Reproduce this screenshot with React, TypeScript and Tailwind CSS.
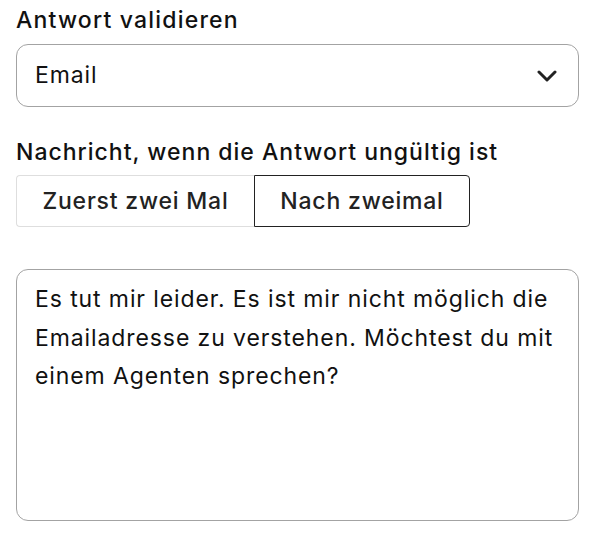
import React from "react";

export default function App() {
  const font = { fontFamily: "Inter, 'Noto Sans', sans-serif" };
  return (
    <div className="w-[590px] h-[538px] bg-white pl-4 pr-[11px] pt-[5px]" style={font}>
      <div className="text-[23px] leading-[30px] font-medium text-[#111] tracking-[1.2px]">Antwort validieren</div>
      <div className="mt-[9px] h-[63px] rounded-[12px] border border-[#a3a3a3] flex items-center justify-between pl-[18px] pr-[21px]">
        <span className="text-[23px] text-[#111] tracking-[0.9px]">Email</span>
        <svg width="20" height="12" viewBox="0 0 20 12">
          <polyline points="2,2 10,10 18,2" fill="none" stroke="#222" strokeWidth="3" strokeLinecap="round" strokeLinejoin="round" />
        </svg>
      </div>
      <div className="mt-[30px] text-[23px] leading-[30px] font-medium text-[#111] tracking-[1px]">Nachricht, wenn die Antwort ungültig ist</div>
      <div className="mt-[8px] flex h-[52px] w-[454px]">
        <div className="w-[238px] flex items-center justify-center border border-r-0 border-[#dedede] rounded-l-[4px] text-[23px] font-medium text-[#222] tracking-[0.8px]">
          Zuerst zwei Mal
        </div>
        <div className="flex-1 flex items-center justify-center border border-[#222] rounded-r-[4px] text-[23px] font-medium text-[#222] tracking-[0.8px]">
          Nach zweimal
        </div>
      </div>
      <div className="mt-[42px] h-[252px] rounded-[12px] border border-[#a3a3a3] px-[18px] pt-[10px] text-[23px] leading-[38.5px] text-[#111] tracking-[0.9px]">
        Es tut mir leider. Es ist mir nicht möglich die Emailadresse zu verstehen. Möchtest du mit einem Agenten sprechen?
      </div>
    </div>
  );
}
